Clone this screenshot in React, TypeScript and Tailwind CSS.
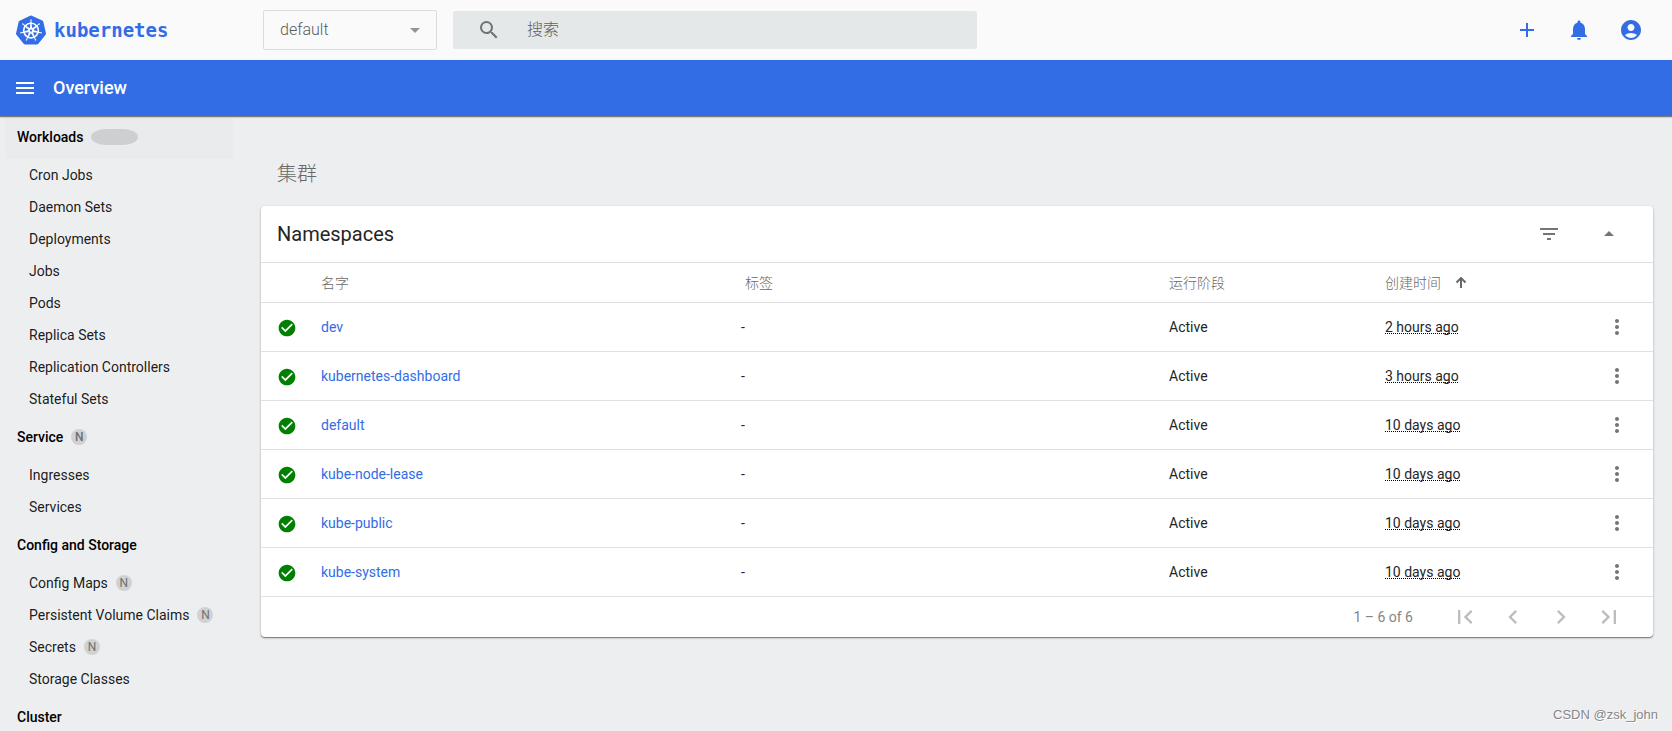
import { useState } from 'react';
import { SiKubernetes } from 'react-icons/si';
import {
  MdAccountCircle,
  MdAdd,
  MdArrowDropDown,
  MdArrowDropUp,
  MdCheckCircle,
  MdChevronLeft,
  MdChevronRight,
  MdFilterList,
  MdFirstPage,
  MdLastPage,
  MdMenu,
  MdMoreVert,
  MdNotifications,
  MdSearch,
} from 'react-icons/md';

interface NavItem {
  label: string;
  namespaced?: boolean;
}

interface NavGroup extends NavItem {
  loading?: boolean;
  items: NavItem[];
}

const navGroups: NavGroup[] = [
  {
    label: 'Workloads',
    loading: true,
    items: [
      { label: 'Cron Jobs' },
      { label: 'Daemon Sets' },
      { label: 'Deployments' },
      { label: 'Jobs' },
      { label: 'Pods' },
      { label: 'Replica Sets' },
      { label: 'Replication Controllers' },
      { label: 'Stateful Sets' },
    ],
  },
  {
    label: 'Service',
    namespaced: true,
    items: [{ label: 'Ingresses' }, { label: 'Services' }],
  },
  {
    label: 'Config and Storage',
    items: [
      { label: 'Config Maps', namespaced: true },
      { label: 'Persistent Volume Claims', namespaced: true },
      { label: 'Secrets', namespaced: true },
      { label: 'Storage Classes' },
    ],
  },
  { label: 'Cluster', items: [] },
];

const namespaces = [
  { name: 'dev', phase: 'Active', created: '2 hours ago' },
  { name: 'kubernetes-dashboard', phase: 'Active', created: '3 hours ago' },
  { name: 'default', phase: 'Active', created: '10 days ago' },
  { name: 'kube-node-lease', phase: 'Active', created: '10 days ago' },
  { name: 'kube-public', phase: 'Active', created: '10 days ago' },
  { name: 'kube-system', phase: 'Active', created: '10 days ago' },
];

const headerActions = [
  { label: 'Create new resource', Icon: MdAdd },
  { label: 'Notifications', Icon: MdNotifications },
  { label: 'Account', Icon: MdAccountCircle },
];

const pagerActions = [
  { label: 'First page', Icon: MdFirstPage },
  { label: 'Previous page', Icon: MdChevronLeft },
  { label: 'Next page', Icon: MdChevronRight },
  { label: 'Last page', Icon: MdLastPage },
];

function SortArrow() {
  return (
    <svg viewBox="0 0 12 12" className="mx-[2px] size-3" fill="none" stroke="currentColor" strokeWidth="2">
      <path d="M6 11V1M1.5 5.5 6 1 10.5 5.5" />
    </svg>
  );
}

function NamespacedBadge() {
  return (
    <span className="flex size-4 items-center justify-center rounded-full bg-[#d0d1d2] text-xs text-[#6f7071]">
      N
    </span>
  );
}

function Header() {
  const [namespace, setNamespace] = useState('default');

  return (
    <header className="flex h-15 shrink-0 items-center bg-[#fafafa]">
      <a href="#/" className="flex w-[263px] shrink-0 items-center gap-2 pl-4 text-[#326de6]">
        <SiKubernetes className="size-[30px]" />
        <span className="font-['DejaVu_Sans_Mono',monospace] text-[19px] font-bold">kubernetes</span>
      </a>

      <div className="relative mr-4 w-[174px] shrink-0">
        <select
          aria-label="Namespace"
          value={namespace}
          onChange={(e) => setNamespace(e.target.value)}
          className="h-10 w-full appearance-none rounded-xs border border-[#dcdcdc] bg-transparent px-4 text-base font-light text-[#5c5c5c]"
        >
          {namespaces.map((ns) => (
            <option key={ns.name}>{ns.name}</option>
          ))}
        </select>
        <MdArrowDropDown className="pointer-events-none absolute top-2 right-2.5 size-6 text-[#949494]" />
      </div>

      <label className="flex h-[38px] max-w-[524px] flex-1 items-center gap-[26px] rounded-xs bg-[#e4e8e8] pl-6 text-[#6f7272]">
        <MdSearch className="size-6 shrink-0" />
        <input
          type="text"
          placeholder="搜索"
          aria-label="搜索"
          className="min-w-0 flex-1 bg-transparent text-base font-light outline-none placeholder:text-[#5f6262]"
        />
      </label>

      <div className="ml-auto flex gap-3 pr-[21px] text-[#326de6]">
        {headerActions.map(({ label, Icon }) => (
          <button key={label} aria-label={label} className="flex size-10 items-center justify-center">
            <Icon className="size-6" />
          </button>
        ))}
      </div>
    </header>
  );
}

function Sidebar() {
  return (
    <nav className="w-[233px] shrink-0 overflow-y-auto text-sm text-black/90 [scrollbar-width:none]">
      {navGroups.map((group) => (
        <section key={group.label}>
          <a
            href="#/"
            className={
              group.loading
                ? 'ml-[5px] flex h-[43px] items-center gap-2 bg-black/1 pb-px pl-3 font-medium text-black'
                : 'ml-[5px] flex h-11 items-center gap-2 pl-3 font-medium text-black'
            }
          >
            {group.label}
            {group.loading && <span className="h-4 w-[47px] rounded-[16px/8px] bg-[#cecfd1]" />}
            {group.namespaced && <NamespacedBadge />}
          </a>
          {group.items.map((item) => (
            <a key={item.label} href="#/" className="flex h-8 items-center gap-2 pl-[29px]">
              {item.label}
              {item.namespaced && <NamespacedBadge />}
            </a>
          ))}
        </section>
      ))}
    </nav>
  );
}

function NamespacesCard() {
  return (
    <section className="rounded-sm bg-white shadow-[0_1px_1px_rgba(0,0,0,0.4),0_1px_3px_rgba(0,0,0,0.2)]">
      <div className="flex h-14 items-center pr-6 pl-4">
        <h2 className="text-xl text-[#252525]">Namespaces</h2>
        <div className="ml-auto flex gap-5 text-[#757575]">
          <button aria-label="Filter" className="flex size-10 items-center justify-center">
            <MdFilterList className="size-6" />
          </button>
          <button aria-label="Collapse" className="flex size-10 items-center justify-center">
            <MdArrowDropUp className="size-6" />
          </button>
        </div>
      </div>

      <table className="w-full table-fixed text-left text-sm text-[#252525]">
        <colgroup>
          <col className="w-15" />
          <col className="w-[420px]" />
          <col />
          <col className="w-[216px]" />
          <col className="w-[208px]" />
          <col className="w-15" />
        </colgroup>
        <thead>
          <tr className="h-10 border-y border-[#e0e0e0] text-[#686868]">
            <th aria-label="Status" />
            <th className="font-light">名字</th>
            <th className="pl-1 font-light">标签</th>
            <th className="font-light">运行阶段</th>
            <th className="font-light">
              <button className="flex items-center gap-3">
                创建时间
                <SortArrow />
              </button>
            </th>
            <th aria-label="Actions" />
          </tr>
        </thead>
        <tbody>
          {namespaces.map((ns) => (
            <tr key={ns.name} className="h-[49px] border-b border-[#e0e0e0]">
              <td className="pt-px pl-4">
                <MdCheckCircle className="size-5 text-[#008000]" />
              </td>
              <td>
                <a href="#/" className="text-[#326de6]">
                  {ns.name}
                </a>
              </td>
              <td>-</td>
              <td>{ns.phase}</td>
              <td>
                <span className="underline decoration-black decoration-dotted decoration-1 underline-offset-1 [text-decoration-skip-ink:none]">
                  {ns.created}
                </span>
              </td>
              <td>
                <button aria-label={`Actions for ${ns.name}`} className="ml-3 flex size-6 items-center justify-center text-[#757575]">
                  <MdMoreVert className="size-6" />
                </button>
              </td>
            </tr>
          ))}
        </tbody>
      </table>

      <div className="flex h-10 items-center justify-end pr-5 text-sm text-[#858585]">
        <span className="mr-7">1 – 6 of 6</span>
        {pagerActions.map(({ label, Icon }) => (
          <button key={label} disabled aria-label={label} className="flex h-10 w-12 items-center justify-center text-[#bdbdbd]">
            <Icon className="size-7" />
          </button>
        ))}
      </div>
    </section>
  );
}

export default function App() {
  return (
    <div className="relative flex h-screen flex-col overflow-hidden bg-[#edeef0] font-[Roboto,'Noto_Sans_CJK_SC',sans-serif]">
      <Header />

      <div className="z-10 flex h-14 shrink-0 items-center gap-4 bg-[#326de6] pl-[13px] text-white shadow-[0_1px_1px_rgba(0,0,0,0.4),0_1px_2px_rgba(0,0,0,0.2)]">
        <button aria-label="Toggle navigation">
          <MdMenu className="size-6" />
        </button>
        <h1 className="text-lg font-medium">Overview</h1>
      </div>

      <div className="flex min-h-0 flex-1">
        <Sidebar />
        <main className="min-w-0 flex-1 overflow-y-auto pt-11 pr-[19px] pl-7 [scrollbar-width:none]">
          <h2 className="mb-[18px] pl-4 text-xl font-light text-[#686868]">集群</h2>
          <NamespacesCard />
        </main>
      </div>

      {/* Watermark */}
      <div className="absolute right-[14px] bottom-[7px] font-['Liberation_Sans',sans-serif] text-[13px] text-[#85878a] [text-shadow:1px_1px_0_#fff]">
        CSDN @zsk_john
      </div>
    </div>
  );
}
